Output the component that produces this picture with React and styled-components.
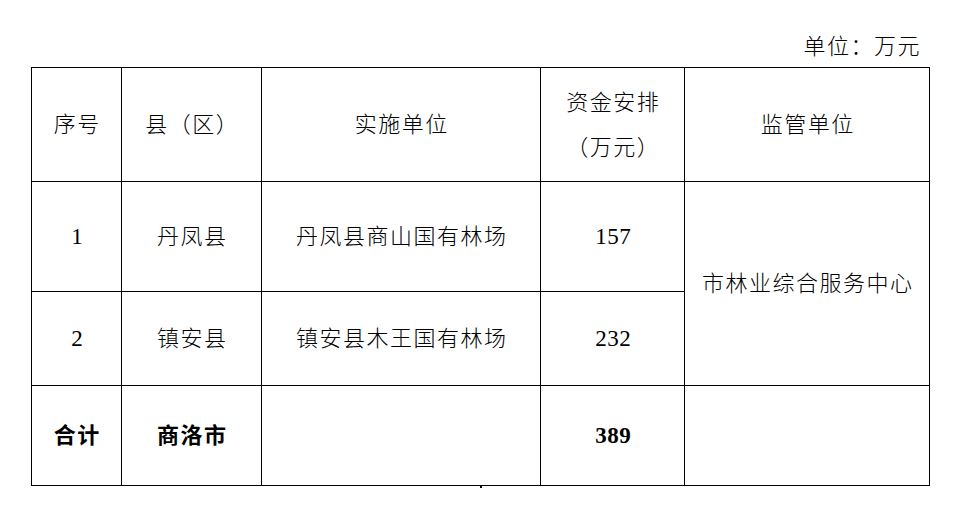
import React from 'react';
import styled, { createGlobalStyle } from 'styled-components';

const GlobalStyle = createGlobalStyle`
  html, body {
    margin: 0;
    padding: 0;
    background: #fff;
  }
  body {
    font-family: "Liberation Serif", "Noto Sans CJK SC", serif;
    color: #000;
  }
`;

const Page = styled.div`
  width: 973px;
  height: 513px;
  padding: 32px 0 0 31px;
  box-sizing: border-box;
  display: flex;
  flex-direction: column;
  gap: 5px;
`;

const UnitNote = styled.div`
  width: 898px;
  padding-right: 8px;
  box-sizing: border-box;
  text-align: right;
  font-size: 22px;
  font-weight: 300;
  line-height: 30px;
  letter-spacing: 1.5px;
`;

const TableWrap = styled.div`
  position: relative;
  width: 898px;

  &::after {
    content: '';
    position: absolute;
    left: 449px;
    top: 418px;
    width: 2px;
    height: 3px;
    background: #000;
  }
`;

const Table = styled.table`
  width: 898px;
  border-collapse: collapse;
  table-layout: fixed;
`;

const Row = styled.tr`
  height: ${p => p.$h}px;
`;

const Cell = styled.td`
  border: 1px solid #000;
  padding: 0 0 0 1.5px;
  text-align: center;
  vertical-align: middle;
  font-size: 22px;
  line-height: 30px;
  letter-spacing: 1.5px;
  font-weight: ${p => (p.$bold ? 700 : 300)};
`;

const Num = styled.span`
  font-size: 23px;
  letter-spacing: 0.5px;
`;

const Line = styled.span`
  display: block;
  line-height: 45px;
`;

const columns = [90, 140, 279, 144, 245];

const rows = [
  { no: '1', county: '丹凤县', unit: '丹凤县商山国有林场', amount: '157', h: 110 },
  { no: '2', county: '镇安县', unit: '镇安县木王国有林场', amount: '232', h: 94 },
];

export default function App() {
  return (
    <>
      <GlobalStyle />
      <Page>
        <UnitNote>单位：万元</UnitNote>
        <TableWrap>
          <Table>
            <colgroup>
              {columns.map((w, i) => (
                <col key={i} style={{ width: w }} />
              ))}
            </colgroup>
            <tbody>
              <Row $h={114}>
                <Cell>序号</Cell>
                <Cell>县（区）</Cell>
                <Cell>实施单位</Cell>
                <Cell>
                  <Line>资金安排</Line>
                  <Line>（万元）</Line>
                </Cell>
                <Cell>监管单位</Cell>
              </Row>
              {rows.map((r, i) => (
                <Row key={r.no} $h={r.h}>
                  <Cell><Num>{r.no}</Num></Cell>
                  <Cell>{r.county}</Cell>
                  <Cell>{r.unit}</Cell>
                  <Cell><Num>{r.amount}</Num></Cell>
                  {i === 0 && <Cell rowSpan={2}>市林业综合服务中心</Cell>}
                </Row>
              ))}
              <Row $h={100}>
                <Cell $bold>合计</Cell>
                <Cell $bold>商洛市</Cell>
                <Cell />
                <Cell $bold><Num>389</Num></Cell>
                <Cell />
              </Row>
            </tbody>
          </Table>
        </TableWrap>
      </Page>
    </>
  );
}
